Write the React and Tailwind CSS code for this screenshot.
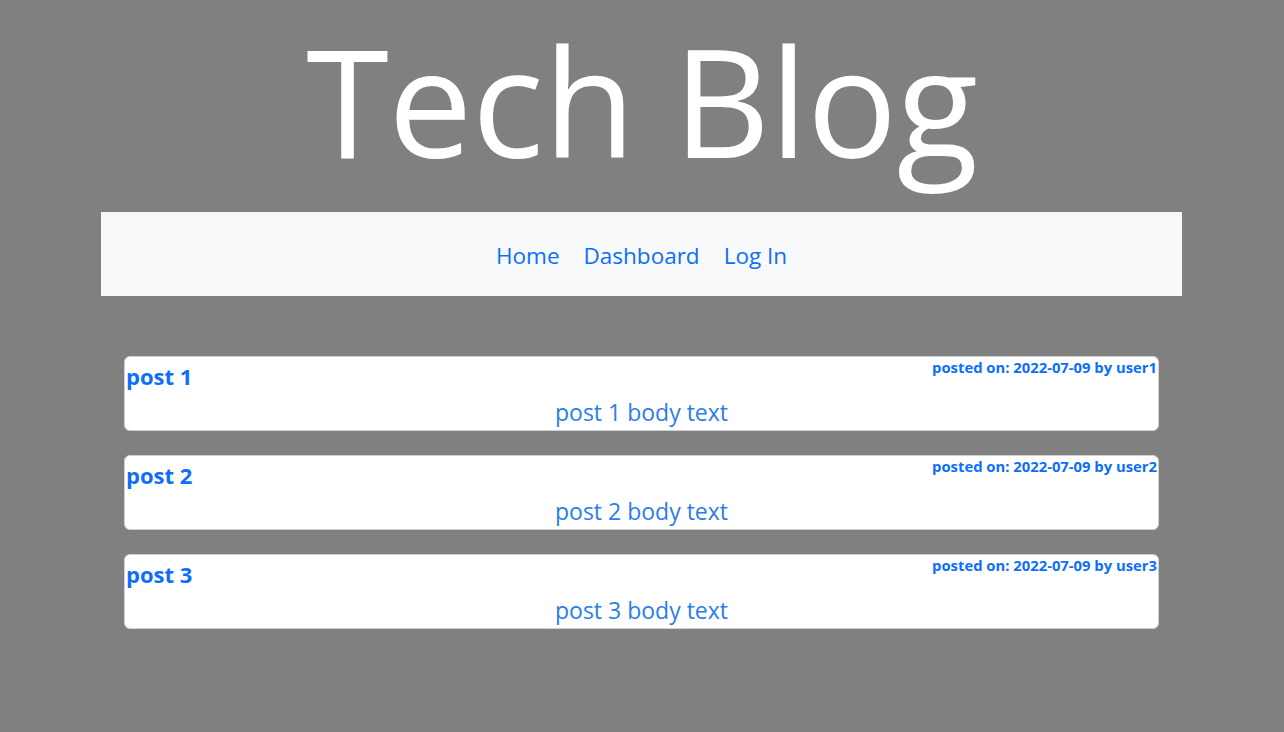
import React from "react";

const posts = [
  { id: 1, title: "post 1", body: "post 1 body text", date: "2022-07-09", user: "user1" },
  { id: 2, title: "post 2", body: "post 2 body text", date: "2022-07-09", user: "user2" },
  { id: 3, title: "post 3", body: "post 3 body text", date: "2022-07-09", user: "user3" },
];

function PostCard({ post }) {
  return (
    <div className="bg-white border border-[#d0d0d0] rounded-[6px] h-[75px] px-[1px]">
      <div className="flex justify-between items-start">
        <h2 className="text-[22px] font-bold leading-[1.2] text-[#0d6efd] mt-[6px]">{post.title}</h2>
        <p className="text-[14.8px] font-bold text-[#0d6efd] mt-0 leading-[20px]">
          posted on: {post.date} by {post.user}
        </p>
      </div>
      <p className="text-center text-[23px] leading-[1.2] text-[#2b7de9] mt-[10px]">{post.body}</p>
    </div>
  );
}

export default function App() {
  return (
    <div className="min-h-screen bg-[#808080] font-['Open_Sans',sans-serif]">
      <header className="text-center pb-[12px]">
        <h1 className="text-white text-[150px] leading-[200px] tracking-[-0.5px]">Tech Blog</h1>
      </header>
      <nav className="ml-[101px] w-[1081px] h-[84px] pt-[4px] bg-[#f8f9fa] flex items-center justify-center gap-[24px]">
        <a className="text-[22.5px] text-[#0d6efd]">Home</a>
        <a className="text-[22.5px] text-[#0d6efd]">Dashboard</a>
        <a className="text-[22.5px] text-[#0d6efd]">Log In</a>
      </nav>
      <main className="mx-[124px] mt-[60px] flex flex-col gap-[24px] w-[1035px]">
        {posts.map((post) => (
          <PostCard key={post.id} post={post} />
        ))}
      </main>
    </div>
  );
}
